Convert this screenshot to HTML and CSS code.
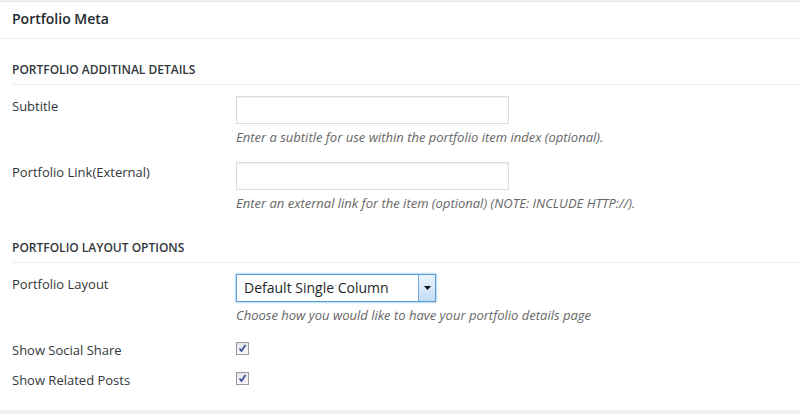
FILE: index.html
```html
<!DOCTYPE html>
<html>
<head>
<meta charset="utf-8">
<link rel="stylesheet" href="styles.css">
</head>
<body>
<div class="postbox">
  <h2 class="box-title">Portfolio Meta</h2>
  <div class="inside">
    <h4 class="section-title">Portfolio Additinal Details</h4>
    <div class="row">
      <label class="label">Subtitle</label>
      <div class="field">
        <input class="text-input" type="text">
        <p class="desc">Enter a subtitle for use within the portfolio item index (optional).</p>
      </div>
    </div>
    <div class="row">
      <label class="label">Portfolio Link(External)</label>
      <div class="field">
        <input class="text-input" type="text">
        <p class="desc">Enter an external link for the item (optional) (NOTE: INCLUDE HTTP://).</p>
      </div>
    </div>
    <h4 class="section-title">Portfolio Layout Options</h4>
    <div class="row">
      <label class="label">Portfolio Layout</label>
      <div class="field">
        <div class="select">
          <span class="select-value">Default Single Column</span>
          <span class="select-btn"><svg width="7" height="4" viewBox="0 0 7 4"><path d="M0 0h7L3.5 4z" fill="#111"/></svg></span>
        </div>
        <p class="desc">Choose how you would like to have your portfolio details page</p>
      </div>
    </div>
    <div class="checks">
      <div class="check-row">
        <span class="label">Show Social Share</span>
        <span class="checkbox"><svg width="11" height="11" viewBox="0 0 11 11"><path d="M2.5 5.5l2 2.5 4-6" fill="none" stroke="#3b4f9a" stroke-width="1.7"/></svg></span>
      </div>
      <div class="check-row">
        <span class="label">Show Related Posts</span>
        <span class="checkbox"><svg width="11" height="11" viewBox="0 0 11 11"><path d="M2.5 5.5l2 2.5 4-6" fill="none" stroke="#3b4f9a" stroke-width="1.7"/></svg></span>
      </div>
    </div>
  </div>
</div>
</body>
</html>
```

FILE: styles.css
```css
html, body {
  margin: 0;
  padding: 0;
}
body {
  background: #f1f1f1;
  padding-top: 1px;
  font-family: "Open Sans", "Liberation Sans", sans-serif;
  color: #32373c;
}
.postbox {
  background: #fff;
  border-top: 1px solid #e5e5e5;
  height: 409px;
  box-sizing: border-box;
}
.box-title {
  margin: 0;
  height: 36px;
  line-height: 34px;
  padding: 0 12px;
  font-size: 14px;
  font-weight: 600;
  color: #23282d;
  border-bottom: 1px solid #eee;
}
.inside {
  padding: 0 0 0 12px;
}
.section-title {
  margin: 0;
  padding: 21px 0 4px;
  line-height: 20px;
  font-size: 12px;
  font-weight: 600;
  text-transform: uppercase;
  color: #32373c;
  border-bottom: 1px solid #eee;
}
.row {
  display: flex;
  padding: 11px 0 5px;
}
.label {
  width: 224px;
  flex: none;
  font-size: 13px;
  line-height: 20px;
  color: #32373c;
}
.field {
  display: flex;
  flex-direction: column;
  align-items: flex-start;
}
.text-input {
  width: 273px;
  height: 28px;
  box-sizing: border-box;
  margin: 0;
  border: 1px solid #ddd;
  box-shadow: inset 0 1px 2px rgba(0,0,0,0.07);
  background: #fff;
}
.desc {
  margin: 4px 0 0;
  font-size: 13px;
  line-height: 18px;
  font-style: italic;
  color: #666;
}
.select {
  width: 200px;
  height: 28px;
  box-sizing: border-box;
  border: 1px solid #5b9dd9;
  box-shadow: 0 0 2px rgba(30,140,190,0.8);
  display: flex;
  align-items: stretch;
  background: #fff;
}
.select-value {
  flex: 1;
  font-size: 14px;
  line-height: 26px;
  padding-left: 7px;
  color: #23282d;
}
.select-btn {
  width: 16px;
  border-left: 1px solid #7aa7d8;
  background: linear-gradient(#eaf4fd, #c4ddf5);
  display: flex;
  align-items: center;
  justify-content: center;
}
.checks {
  padding: 6px 0 0;
}
.check-row {
  display: flex;
  align-items: center;
  height: 30px;
}
.checkbox {
  width: 13px;
  height: 13px;
  box-sizing: border-box;
  border: 1px solid #9a9aa6;
  background: linear-gradient(#e6e6e6, #fafafa);
  display: flex;
  align-items: center;
  justify-content: center;
  margin-top: -3px;
}
```
